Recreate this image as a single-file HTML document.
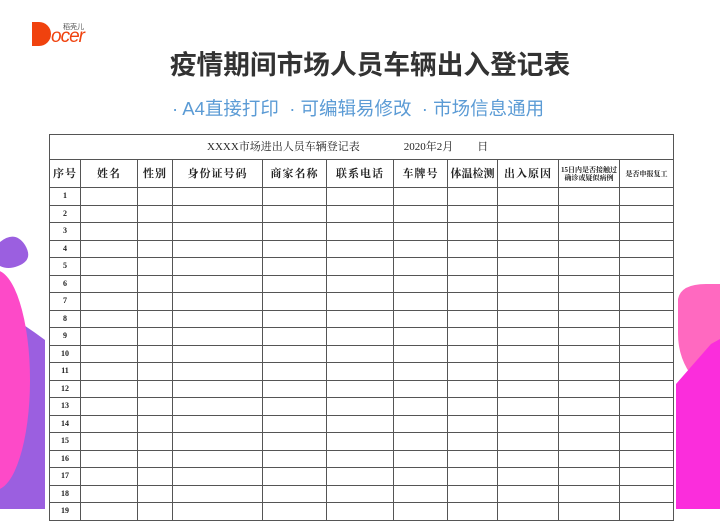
<!DOCTYPE html>
<html><head><meta charset="utf-8"><style>
body{margin:0;width:720px;height:509px;overflow:hidden;background:#fff;position:relative;font-family:"Liberation Sans","Noto Sans CJK SC",sans-serif}
.abs{position:absolute}
table{border-collapse:collapse;position:absolute;left:49px;top:134px;table-layout:fixed;font-family:"Liberation Serif","Noto Serif CJK SC",serif;color:#222;background:#fff}
td{border:1px solid #555;padding:0;text-align:center;font-size:10px;height:16.5px;line-height:10px;overflow:hidden}
tr.h td{height:27px;font-size:11px;letter-spacing:1px;font-weight:bold;white-space:nowrap}
tr.t td{height:24px;font-size:11px;text-align:left}
td.n{font-size:8px;font-weight:bold}
</style></head><body>
<svg class="abs" style="left:0;top:230px" width="50" height="279">
<path d="M0 12 Q15 0 25 15 Q34 30 18 36 Q8 40 0 36Z" fill="#9b5fe0"/>
<path d="M0 80 Q25 95 45 110 L45 279 L0 279Z" fill="#9b5fe0"/>
<ellipse cx="-5" cy="150" rx="35" ry="110" fill="#fd4ac8"/>
</svg>
<svg class="abs" style="left:676px;top:284px" width="44" height="225">
<path d="M2 15 Q5 0 30 0 L44 0 L44 105 Q30 108 18 95 Q2 75 2 50Z" fill="#ff69c0"/>
<path d="M0 100 L35 60 L44 55 L44 225 L0 225Z" fill="#fb2ddc"/>
</svg>
<div class="abs" style="left:32px;top:22px;width:19px;height:24px;background:#f0420e;border-radius:0 12px 12px 0"></div>
<div class="abs" style="left:51px;top:26px;font-size:19px;color:#f0420e;font-style:italic;letter-spacing:-1px">ocer</div>
<div class="abs" style="left:63px;top:22px;font-size:7px;color:#555">稻壳儿</div>
<div class="abs" style="left:0;width:740px;top:43px;text-align:center;font-size:26.7px;font-weight:bold;color:#333">疫情期间市场人员车辆出入登记表</div>
<div class="abs" style="left:172px;top:95px;font-size:18.5px;color:#5b9bd5">· A4直接打印 &nbsp;· 可编辑易修改 &nbsp;· 市场信息通用</div>
<table>
<colgroup><col style="width:31px"><col style="width:57px"><col style="width:35px"><col style="width:90px"><col style="width:64px"><col style="width:67px"><col style="width:54px"><col style="width:50px"><col style="width:61px"><col style="width:61px"><col style="width:54px"></colgroup>
<tr class="t"><td colspan="11"><span style="margin-left:157px">XXXX市场进出人员车辆登记表</span><span style="margin-left:44px">2020年2月</span><span style="margin-left:24px">日</span></td></tr>
<tr class="h"><td>序号</td><td>姓名</td><td>性别</td><td>身份证号码</td><td>商家名称</td><td>联系电话</td><td>车牌号</td><td style="letter-spacing:0">体温检测</td><td>出入原因</td><td style="font-size:7px;line-height:8px;letter-spacing:0;white-space:normal">15日内是否接触过确诊或疑似病例</td><td style="font-size:7px;letter-spacing:0">是否申报复工</td></tr>
<tr><td class="n">1</td><td></td><td></td><td></td><td></td><td></td><td></td><td></td><td></td><td></td><td></td></tr>
<tr><td class="n">2</td><td></td><td></td><td></td><td></td><td></td><td></td><td></td><td></td><td></td><td></td></tr>
<tr><td class="n">3</td><td></td><td></td><td></td><td></td><td></td><td></td><td></td><td></td><td></td><td></td></tr>
<tr><td class="n">4</td><td></td><td></td><td></td><td></td><td></td><td></td><td></td><td></td><td></td><td></td></tr>
<tr><td class="n">5</td><td></td><td></td><td></td><td></td><td></td><td></td><td></td><td></td><td></td><td></td></tr>
<tr><td class="n">6</td><td></td><td></td><td></td><td></td><td></td><td></td><td></td><td></td><td></td><td></td></tr>
<tr><td class="n">7</td><td></td><td></td><td></td><td></td><td></td><td></td><td></td><td></td><td></td><td></td></tr>
<tr><td class="n">8</td><td></td><td></td><td></td><td></td><td></td><td></td><td></td><td></td><td></td><td></td></tr>
<tr><td class="n">9</td><td></td><td></td><td></td><td></td><td></td><td></td><td></td><td></td><td></td><td></td></tr>
<tr><td class="n">10</td><td></td><td></td><td></td><td></td><td></td><td></td><td></td><td></td><td></td><td></td></tr>
<tr><td class="n">11</td><td></td><td></td><td></td><td></td><td></td><td></td><td></td><td></td><td></td><td></td></tr>
<tr><td class="n">12</td><td></td><td></td><td></td><td></td><td></td><td></td><td></td><td></td><td></td><td></td></tr>
<tr><td class="n">13</td><td></td><td></td><td></td><td></td><td></td><td></td><td></td><td></td><td></td><td></td></tr>
<tr><td class="n">14</td><td></td><td></td><td></td><td></td><td></td><td></td><td></td><td></td><td></td><td></td></tr>
<tr><td class="n">15</td><td></td><td></td><td></td><td></td><td></td><td></td><td></td><td></td><td></td><td></td></tr>
<tr><td class="n">16</td><td></td><td></td><td></td><td></td><td></td><td></td><td></td><td></td><td></td><td></td></tr>
<tr><td class="n">17</td><td></td><td></td><td></td><td></td><td></td><td></td><td></td><td></td><td></td><td></td></tr>
<tr><td class="n">18</td><td></td><td></td><td></td><td></td><td></td><td></td><td></td><td></td><td></td><td></td></tr>
<tr><td class="n">19</td><td></td><td></td><td></td><td></td><td></td><td></td><td></td><td></td><td></td><td></td></tr>
</table>
</body></html>
